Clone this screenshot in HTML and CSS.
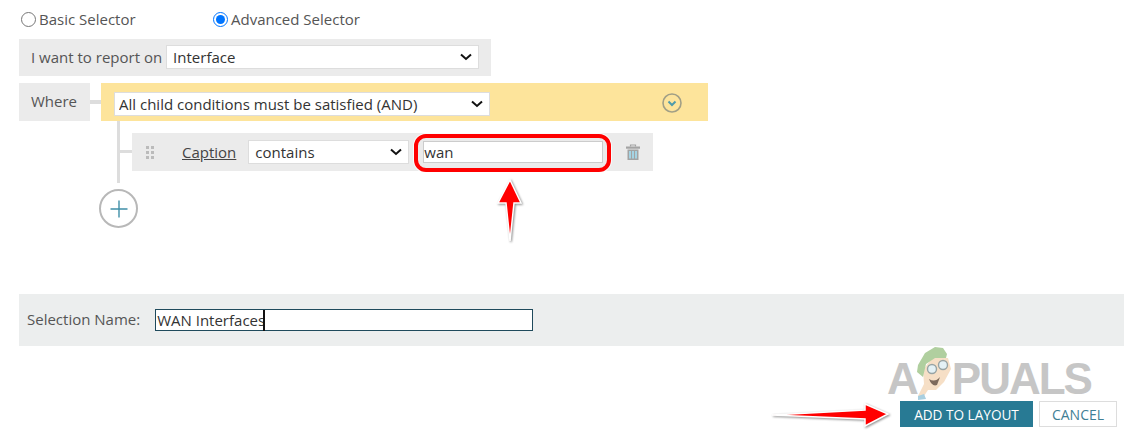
FILE: index.html
```html
<!DOCTYPE html>
<html lang="en">
<head>
    <meta charset="UTF-8">
    <title>Advanced Selector</title>
    <link rel="stylesheet" href="styles.css">
</head>
<body>
    <div class="page">
        <div class="radios">
            <label class="radio radio-basic"><input type="radio" name="mode">Basic Selector</label>
            <label class="radio"><input type="radio" name="mode" checked>Advanced Selector</label>
        </div>

        <div class="report-row">
            <label for="reportOn">I want to report on</label>
            <select id="reportOn" class="report-select"><option>Interface</option></select>
        </div>

        <div class="where-row">
            <div class="where-label">Where</div>
            <div class="where-link"></div>
            <div class="where-group">
                <select class="group-select"><option>All child conditions must be satisfied (AND)</option></select>
                <svg class="group-toggle" width="22" height="22" viewBox="0 0 22 22">
                    <circle cx="11" cy="11" r="9" fill="none" stroke="#a19f86" stroke-width="1.6"/>
                    <path d="M7.5 9.5 L11 13 L14.5 9.5" fill="none" stroke="#4f9bab" stroke-width="2"/>
                </svg>
            </div>
        </div>

        <div class="conditions">
            <div class="condition-link"></div>
            <div class="condition">
                <div class="drag-handle"><i></i><i></i><i></i><i></i><i></i><i></i></div>
                <a class="field-name" href="#">Caption</a>
                <select class="operator"><option>contains</option></select>
                <input class="value" type="text" value="wan">
                <svg class="trash" width="16" height="17" viewBox="0 0 16 17">
                    <path d="M5.5 2.5 V1 H10.5 V2.5" fill="none" stroke="#a3a3a3" stroke-width="1.2"/>
                    <rect x="1" y="2.5" width="14" height="2.2" fill="#a3a3a3"/>
                    <rect x="2.5" y="5.5" width="11" height="10.5" fill="#a3a3a3"/>
                    <rect x="4" y="7" width="2" height="7.5" fill="#a5d3e3"/>
                    <rect x="7" y="7" width="2" height="7.5" fill="#a5d3e3"/>
                    <rect x="10" y="7" width="2" height="7.5" fill="#a5d3e3"/>
                </svg>
            </div>
        </div>

        <button class="add-condition">
            <svg width="20" height="20" viewBox="0 0 20 20">
                <path d="M10 1.5 V18.5 M1.5 10 H18.5" stroke="#3f8fa8" stroke-width="1.4"/>
            </svg>
        </button>

        <div class="name-bar">
            <label for="selectionName">Selection Name:</label>
            <input id="selectionName" class="name-input" type="text" value="WAN Interfaces">
        </div>

        <div class="actions">
            <button class="btn-primary">ADD TO LAYOUT</button>
            <button class="btn-cancel">CANCEL</button>
        </div>
    </div>

    <!-- annotations drawn on top of the screenshot -->
    <div class="highlight"></div>
    <div class="text-caret"></div>

    <svg class="arrow arrow-up" width="40" height="80" viewBox="490 170 40 80">
        <path d="M510 180 L521 203 L514 203 L510 241 L506 203 L498 203 Z" fill="#ff0000" stroke="#fff" stroke-width="1.5"/>
    </svg>
    <svg class="arrow arrow-right" width="130" height="40" viewBox="770 395 130 40">
        <path d="M772 415 L865 410 L865 404 L888 414 L865 426 L865 419 Z" fill="#ff0000" stroke="#fff" stroke-width="1.5"/>
    </svg>

    <div class="watermark">
        <span class="wm-a">A</span><span class="wm-rest">PUALS</span>
        <svg class="mascot" width="50" height="60" viewBox="25 0 50 60">
            <path d="M43 30 L52 18 L68 18 L71 29 L64 42 L56 50 L48 50 L44 56 L38 56 L44 44 Z" fill="#f6dfc6"/>
            <path d="M38 56 L44 54 L46 59 L38 60 Z" fill="#a9cfe0"/>
            <path d="M37 32 L38 25 L45 13 L55 7 L63 8 L67 14 L66 18 L55 18 L46 24 L43 37 Z" fill="#b0cf9f"/>
            <circle cx="52" cy="29" r="4.5" fill="#e4f1f5" stroke="#98a4a4" stroke-width="1.4"/>
            <circle cx="63" cy="25" r="4.5" fill="#e4f1f5" stroke="#98a4a4" stroke-width="1.4"/>
            <path d="M49 39 Q55 43 60 37 L57 45 Q52 47 49 39 Z" fill="#7d6a5c"/>
        </svg>
    </div>
</body>
</html>
```

FILE: styles.css
```css
body {
    font-family: "Open Sans", Arial, sans-serif;
    font-size: 15px;
    color: #555;
    background-color: white;
    margin: 0;
    overflow: hidden;
}
.page {
    padding: 0 9px 0 19px;
}
select, input, button {
    font-family: inherit;
    font-size: 15px;
    box-sizing: border-box;
}
select {
    appearance: none;
    background-color: white;
    background-image: url("data:image/svg+xml,%3Csvg xmlns='http://www.w3.org/2000/svg' width='12' height='8'%3E%3Cpath d='M1 1.5 L6 6 L11 1.5' fill='none' stroke='%23111' stroke-width='2'/%3E%3C/svg%3E");
    background-repeat: no-repeat;
    background-position: right 6px center;
    border: 1px solid #ddd;
    border-radius: 0;
    color: #333;
    padding: 0 6px;
    margin: 0;
}
.radios {
    display: flex;
    align-items: center;
    height: 38px;
    padding: 0 0 1px 2px;
}
.radio {
    display: flex;
    align-items: center;
    gap: 3px;
    color: #555;
}
.radio input {
    width: 15px;
    height: 15px;
    margin: 0;
}
.radio-basic {
    width: 192px;
}
.report-row {
    display: flex;
    align-items: center;
    gap: 4px;
    width: 472px;
    height: 37px;
    box-sizing: border-box;
    padding: 0 0 1px 12px;
    background-color: #ebebeb;
    margin-bottom: 7px;
}
.report-select {
    width: 313px;
    height: 24px;
}
.where-row {
    display: flex;
    align-items: stretch;
    height: 38px;
}
.where-label {
    width: 71px;
    box-sizing: border-box;
    padding: 8px 0 0 12px;
    background-color: #ebebeb;
}
.where-link {
    width: 11px;
    height: 4px;
    margin-top: 17px;
    background-color: #ddd;
}
.where-group {
    display: flex;
    align-items: center;
    justify-content: space-between;
    width: 607px;
    box-sizing: border-box;
    padding: 4px 25px 0 13px;
    background-color: #fde49b;
}
.group-select {
    width: 376px;
    height: 24px;
    padding-left: 4px;
}
.group-toggle {
    margin-top: -3px;
}
.conditions {
    display: flex;
    align-items: flex-start;
    height: 62px;
    margin-left: 98px;
    border-left: 3px solid #ddd;
    box-sizing: border-box;
    padding-top: 12px;
}
.condition-link {
    width: 12px;
    height: 3px;
    margin-top: 17px;
    background-color: #ddd;
}
.condition {
    display: flex;
    align-items: center;
    width: 521px;
    height: 38px;
    background-color: #ebebeb;
}
.drag-handle {
    display: grid;
    grid-template-columns: 3px 3px;
    gap: 2px;
    margin-left: 14px;
}
.drag-handle i {
    width: 3px;
    height: 3px;
    background-color: #bbb;
}
.field-name {
    margin-left: 28px;
    color: #444;
}
.operator {
    width: 161px;
    height: 24px;
    margin-left: 12px;
}
.value {
    width: 180px;
    height: 22px;
    margin-left: 14px;
    padding: 0;
    border: 1px solid #ccc;
    color: #333;
    background-color: white;
}
.trash {
    margin-left: 22px;
}
.add-condition {
    display: flex;
    align-items: center;
    justify-content: center;
    width: 39px;
    height: 39px;
    padding: 0;
    margin: 6px 0 0 80px;
    background-color: white;
    border: 2px solid #b8b8b8;
    border-radius: 50%;
}
.name-bar {
    display: flex;
    align-items: center;
    height: 52px;
    margin-top: 66px;
    padding-left: 8px;
    background-color: #eceeee;
}
.name-bar label {
    padding-bottom: 2px;
}
.name-input {
    width: 378px;
    height: 22px;
    margin-left: 15px;
    padding: 0 0 0 1px;
    border: 1px solid #1f4a5c;
    color: #333;
    background-color: white;
}
.actions {
    display: flex;
    justify-content: flex-end;
    gap: 6px;
    margin: 55px 7px 0 0;
}
.btn-primary {
    width: 133px;
    height: 26px;
    padding: 0;
    border: none;
    font-size: 13.6px;
    color: white;
    background-color: #287a94;
}
.btn-cancel {
    width: 78px;
    height: 26px;
    padding: 0;
    border: 1px solid #ddd;
    font-size: 14px;
    color: #3f7f95;
    background-color: white;
}

/* annotations */
.highlight {
    position: absolute;
    left: 414px;
    top: 134px;
    width: 189px;
    height: 30px;
    border: 4px solid #f00;
    border-radius: 12px;
    box-shadow: 0 0 0 1px rgba(255,255,255,0.8);
}
.text-caret {
    position: absolute;
    left: 263px;
    top: 310px;
    width: 2px;
    height: 21px;
    background-color: #111;
}
.arrow {
    position: absolute;
    filter: drop-shadow(1px 1px 1px rgba(0,0,0,0.45));
}
.arrow-up {
    left: 490px;
    top: 170px;
}
.arrow-right {
    left: 770px;
    top: 395px;
}
.watermark {
    position: absolute;
    left: 887px;
    top: 359px;
    display: flex;
    gap: 33px;
    font-family: "Liberation Sans", Arial, sans-serif;
    font-size: 44px;
    font-weight: 700;
    line-height: 40px;
    color: #c6c6c6;
}
.wm-rest {
    letter-spacing: -2px;
}
.mascot {
    position: absolute;
    left: 18px;
    top: -19px;
}
```
